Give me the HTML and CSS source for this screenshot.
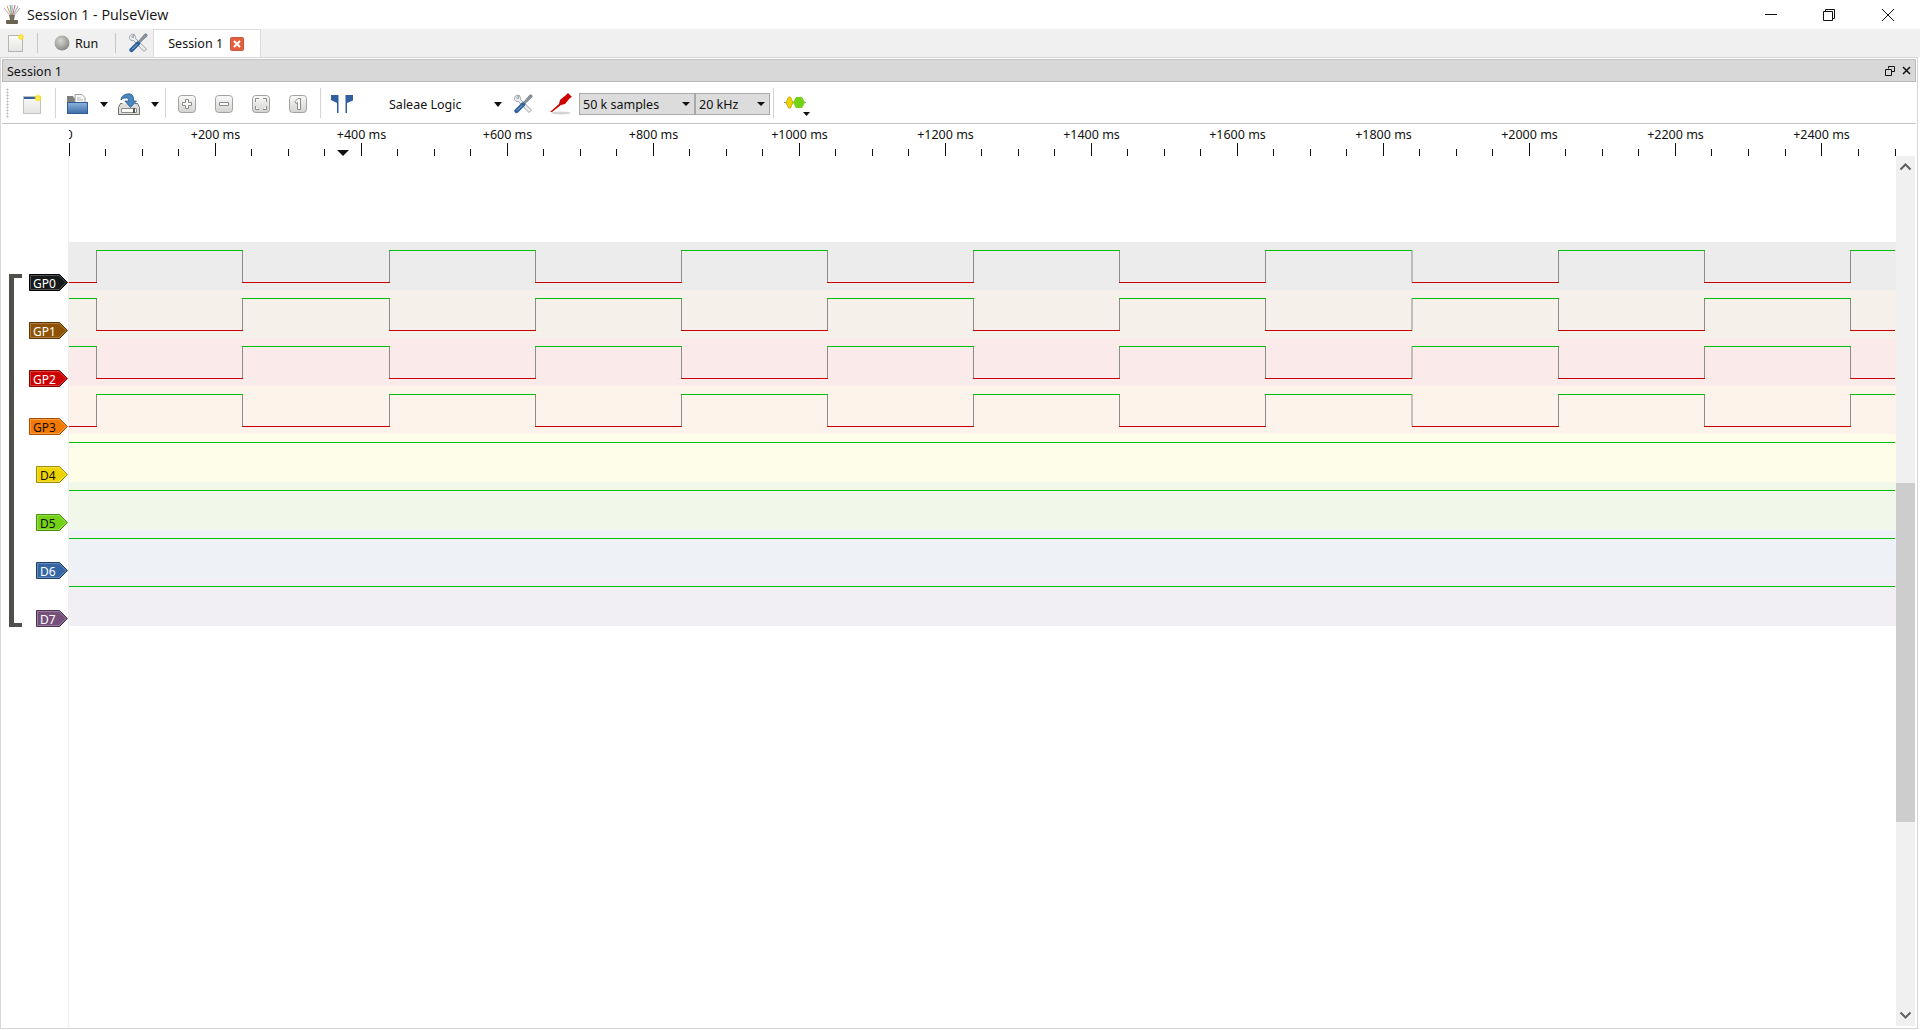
FILE: index.html
```html
<!DOCTYPE html>
<html lang="en">
<head>
    <meta charset="UTF-8">
    <title>Session 1 - PulseView</title>
    <link rel="stylesheet" href="styles.css">
</head>
<body>
    <!-- Shared icons -->
    <svg class="defs" width="0" height="0">
        <defs>
            <radialGradient id="runBall" cx="40%" cy="35%" r="70%">
                <stop offset="0" stop-color="#d6d6d4"/>
                <stop offset="1" stop-color="#85857f"/>
            </radialGradient>
            <radialGradient id="glow">
                <stop offset="0" stop-color="#fff36a"/>
                <stop offset="0.55" stop-color="#f5e32a"/>
                <stop offset="1" stop-color="#f5e32a" stop-opacity="0"/>
            </radialGradient>
            <linearGradient id="pageFill" x1="0" y1="0" x2="0" y2="1">
                <stop offset="0" stop-color="#fbfbfa"/>
                <stop offset="1" stop-color="#e4e4e2"/>
            </linearGradient>
            <linearGradient id="btnFill" x1="0" y1="0" x2="0" y2="1">
                <stop offset="0" stop-color="#fafafa"/>
                <stop offset="1" stop-color="#d2d2d0"/>
            </linearGradient>
            <linearGradient id="folderFill" x1="0" y1="0" x2="0" y2="1">
                <stop offset="0" stop-color="#8db3dc"/>
                <stop offset="1" stop-color="#3d6ea8"/>
            </linearGradient>
            <symbol id="tools" viewBox="0 0 20 20">
                <path d="M6 1.500C3.500.5 1 2.500 1.500 5.500 2 7 4 8 5.500 7.500L16 18.500 18.500 16 7.500 5.500C8 4.500 7.500 2.500 6 1.500L5.500 4.500 3.500 4z" fill="#eceeef" stroke="#8f969c" stroke-width=".9"/>
                <path d="M18.800 1.200 17 .8 9.500 9.500 10.800 10.800 19.200 3z" fill="#8a949e" stroke="#5f6a75" stroke-width=".6"/>
                <path d="M10 10.500 3.500 17" fill="none" stroke="#2f629c" stroke-width="4.400" stroke-linecap="round"/>
                <path d="M9 11.500 4 16.500" fill="none" stroke="#8fb4da" stroke-width="1"/>
            </symbol>
            <!-- Traces: a starts low, b starts high -->
            <symbol id="waveEdges" viewBox="0 0 1827 48">
                <path class="edge" d="M27.500 8.500V40.500M173.500 8.500V40.500M320.500 8.500V40.500M466.500 8.500V40.500M612.500 8.500V40.500M758.500 8.500V40.500M904.500 8.500V40.500M1050.500 8.500V40.500M1196.500 8.500V40.500M1343 8.500V40.500M1489.500 8.500V40.500M1635.500 8.500V40.500M1781.500 8.500V40.500"/>
            </symbol>
            <symbol id="waveA" viewBox="0 0 1827 48">
                <use href="#waveEdges"/>
                <path class="high" d="M27 8.500H174M320 8.500H467M612 8.500H759M904 8.500H1051M1196 8.500H1343M1489 8.500H1636M1781 8.500H1826"/>
                <path class="low" d="M0 40.500H28M173 40.500H321M466 40.500H613M758 40.500H905M1050 40.500H1197M1343 40.500H1490M1635 40.500H1782"/>
            </symbol>
            <symbol id="waveB" viewBox="0 0 1827 48">
                <use href="#waveEdges"/>
                <path class="high" d="M0 8.500H28M173 8.500H321M466 8.500H613M758 8.500H905M1050 8.500H1197M1343 8.500H1490M1635 8.500H1782"/>
                <path class="low" d="M27 40.500H174M320 40.500H467M612 40.500H759M904 40.500H1051M1196 40.500H1343M1489 40.500H1636M1781 40.500H1826"/>
            </symbol>
            <symbol id="zoomBtn" viewBox="0 0 18 18">
                <rect x="0.500" y="0.500" width="17" height="17" rx="3" fill="url(#btnFill)" stroke="#a2a2a0"/>
            </symbol>
        </defs>
    </svg>

    <header class="titlebar">
        <svg class="app-icon" width="18" height="20" viewBox="0 0 18 20">
            <path d="M9 13 1 3" stroke="#d8a0c8" fill="none"/>
            <path d="M9 13 4 1" stroke="#c8a040" fill="none"/>
            <path d="M9 13 7 0" stroke="#70b070" fill="none"/>
            <path d="M9 13V0" stroke="#6fa0d8" fill="none"/>
            <path d="M9 13 12 0" stroke="#d86060" fill="none"/>
            <path d="M9 13 15 1" stroke="#a0a0a0" fill="none"/>
            <path d="M9 13 17 3" stroke="#b0b0b0" fill="none"/>
            <path d="M6 10h6l-1 5H7z" fill="#77705f"/>
            <rect x="3" y="15" width="12" height="4" rx="1" fill="#6a6352"/>
        </svg>
        <span class="app-title">Session 1 - PulseView</span>
        <div class="win-buttons">
            <span class="win-btn">
                <svg width="14" height="14" viewBox="0 0 14 14"><path d="M1 6.500H13" stroke="#111" fill="none"/></svg>
            </span>
            <span class="win-btn">
                <svg width="14" height="14" viewBox="0 0 14 14"><path d="M3.500 3V1.500H12.500V10.500H10.500M1.500 3.500H10.500V12.500H1.500Z" stroke="#111" fill="none"/></svg>
            </span>
            <span class="win-btn">
                <svg width="14" height="14" viewBox="0 0 14 14"><path d="M1 1 13 13M13 1 1 13" stroke="#111" fill="none"/></svg>
            </span>
        </div>
    </header>

    <nav class="tabbar">
        <svg class="ml-8" width="16" height="20" viewBox="0 0 16 20">
            <rect x="0.500" y="2.500" width="14" height="16" fill="url(#pageFill)" stroke="#b4b4b0"/>
            <circle cx="13" cy="4" r="3.500" fill="url(#glow)"/>
        </svg>
        <span class="tab-sep ml-13"></span>
        <svg class="ml-16" width="16" height="16" viewBox="0 0 16 16">
            <circle cx="8" cy="8" r="7.500" fill="url(#runBall)"/>
        </svg>
        <span class="tab-text">Run</span>
        <span class="tab-sep ml-17"></span>
        <svg class="ml-12" width="20" height="20"><use href="#tools"/></svg>
        <div class="tab">
            <span>Session 1</span>
            <svg class="tab-close" width="14" height="14" viewBox="0 0 14 14">
                <rect x="0.500" y="0.500" width="13" height="13" rx="1" fill="#e2603f" stroke="#c85a3c"/>
                <path d="M4 4 10 10M10 4 4 10" stroke="#fff" stroke-width="2" fill="none"/>
            </svg>
        </div>
    </nav>

    <main class="dock">
        <div class="dock-title">
            <span>Session 1</span>
            <svg class="dock-float" width="10" height="10" viewBox="0 0 10 10">
                <path d="M3.500 2.500V.5H9.500V5.500H7M.5 3.500H6.500V9.500H.5Z" fill="none" stroke="#111"/>
            </svg>
            <svg class="dock-close" width="9" height="9" viewBox="0 0 9 9">
                <path d="M1 1 8 8M8 1 1 8" fill="none" stroke="#111" stroke-width="1.500"/>
            </svg>
        </div>

        <div class="toolbar">
            <span class="grip"></span>
            <svg class="ml-14" width="19" height="20" viewBox="0 0 19 20">
                <rect x="0.500" y="2.500" width="17" height="17" fill="url(#pageFill)" stroke="#c0c0bc"/>
                <rect x="1" y="3" width="16" height="2" fill="#2f5f9e"/>
                <circle cx="15" cy="4" r="4" fill="url(#glow)"/>
            </svg>
            <span class="tool-sep ml-13"></span>
            <svg class="ml-11" width="21" height="20" viewBox="0 0 21 20">
                <path d="M0 2h6l1 2h3v15H0z" fill="#7f7f7d"/>
                <path d="M8 .5h7l3 3v8H8z" fill="#f6f6f4" stroke="#a0a0a0"/>
                <path d="M10 4h4M10 6h6" stroke="#b8b8b8"/>
                <rect x="0.500" y="8.500" width="20" height="11" fill="url(#folderFill)" stroke="#2f5a92"/>
            </svg>
            <span class="caret ml-12"></span>
            <svg class="ml-10" width="22" height="22" viewBox="0 0 22 22">
                <path d="M4.500 10.500H2.500L.5 14.500V21.500H21.500V14.500L19.500 10.500H17" fill="#dededc" stroke="#6e6e6a"/>
                <path d="M3.500 15.500H18.500V19.500H3.500z" fill="#fbfbfa" stroke="#8c8c88"/>
                <rect x="15" y="15" width="2" height="5" fill="#55554f"/>
                <path d="M3 7C3 3 7 .8 11 .8 14 .8 15.500 3 15.500 6V8H18.500L12.500 14.500 6.800 8H10.500V7C10.500 5.500 9 5 8 5 6 5 4 5.500 3 7Z" fill="#4a86c0" stroke="#2c5c94" stroke-width=".8"/>
            </svg>
            <span class="caret ml-11"></span>
            <span class="tool-sep ml-6"></span>
            <svg class="ml-12" width="18" height="18" viewBox="0 0 18 18">
                <use href="#zoomBtn" width="18" height="18"/>
                <path class="zoom-glyph" d="M7.500 4.500h3v3h3v3h-3v3h-3v-3h-3v-3h3z"/>
            </svg>
            <svg class="ml-19" width="18" height="18" viewBox="0 0 18 18">
                <use href="#zoomBtn" width="18" height="18"/>
                <path class="zoom-glyph" d="M4.500 7.500h9v3h-9z"/>
            </svg>
            <svg class="ml-19" width="18" height="18" viewBox="0 0 18 18">
                <use href="#zoomBtn" width="18" height="18"/>
                <path class="zoom-glyph" d="M3.500 7V3.500H7M11 3.500h3.500V7M14.500 11v3.500H11M7 14.500H3.500V11"/>
            </svg>
            <svg class="ml-19" width="18" height="18" viewBox="0 0 18 18">
                <use href="#zoomBtn" width="18" height="18"/>
                <path class="zoom-glyph" d="M6 6.500 9 3.500h2.500v11h-3V7.500L7 8.500z"/>
            </svg>
            <span class="tool-sep ml-13"></span>
            <svg class="ml-10" width="22" height="18" viewBox="0 0 22 18">
                <path d="M0 0h7.500v18H6V8L0 5z" fill="#2f5f9e"/>
                <path d="M22 0h-7.500v18H16V8l6-2.500z" fill="#2f5f9e"/>
            </svg>
            <div class="device ml-36">
                <span>Saleae Logic</span>
                <span class="caret"></span>
            </div>
            <svg class="ml-11" width="20" height="20"><use href="#tools"/></svg>
            <svg class="ml-17" width="22" height="22" viewBox="0 0 22 22">
                <ellipse cx="11" cy="20" rx="10" ry="1.500" fill="#d4d4d2"/>
                <path d="M0 19 9 11 10 7l6-5 2-2 4 4-2 1-5 6-4 1-9 7z" fill="#cc0000"/>
            </svg>
            <div class="combo combo-samples ml-7">
                <span>50 k samples</span>
                <span class="caret"></span>
            </div>
            <div class="combo combo-rate">
                <span>20 kHz</span>
                <span class="caret"></span>
            </div>
            <span class="tool-sep ml-3"></span>
            <svg class="decoder-icon ml-10" width="28" height="22" viewBox="0 0 28 22">
                <path d="M0 8.500H22" stroke="#8a8a86" fill="none"/>
                <path d="M2 8.500 4.500 3 6.500 3 9 8.500 6.500 14 4.500 14z" fill="#edd400" stroke="#c4a000" stroke-width=".8"/>
                <path d="M9 8.500 12 3H18L21 8.500 18 14H12z" fill="#73d216"/>
                <path d="M19 18h7l-3.500 4z" fill="#111"/>
            </svg>
        </div>

        <div class="ruler">
            <svg width="1827" height="32" viewBox="69 124 1827 32">
                <g class="ruler-text">
                    <text x="69" y="139">0</text>
                    <text x="215.500" y="139">+200 ms</text>
                    <text x="361.500" y="139">+400 ms</text>
                    <text x="507.500" y="139">+600 ms</text>
                    <text x="653.500" y="139">+800 ms</text>
                    <text x="799.500" y="139">+1000 ms</text>
                    <text x="945.500" y="139">+1200 ms</text>
                    <text x="1091.500" y="139">+1400 ms</text>
                    <text x="1237.500" y="139">+1600 ms</text>
                    <text x="1383.500" y="139">+1800 ms</text>
                    <text x="1529.500" y="139">+2000 ms</text>
                    <text x="1675.500" y="139">+2200 ms</text>
                    <text x="1821.500" y="139">+2400 ms</text>
                </g>
                <path class="tick" d="M69.500 143V156M215.500 143V156M361.500 143V156M507.500 143V156M653.500 143V156M799.500 143V156M945.500 143V156M1091.500 143V156M1237.500 143V156M1383.500 143V156M1529.500 143V156M1675.500 143V156M1821.500 143V156"/>
                <path class="tick" d="M105.500 149V156M142.500 149V156M178.500 149V156M251.500 149V156M288.500 149V156M324.500 149V156M397.500 149V156M434.500 149V156M470.500 149V156M543.500 149V156M580.500 149V156M616.500 149V156M689.500 149V156M726.500 149V156M762.500 149V156M835.500 149V156M872.500 149V156M908.500 149V156M981.500 149V156M1018.500 149V156M1054.500 149V156M1127.500 149V156M1164.500 149V156M1200.500 149V156M1273.500 149V156M1310.500 149V156M1346.500 149V156M1419.500 149V156M1456.500 149V156M1492.500 149V156M1565.500 149V156M1602.500 149V156M1638.500 149V156M1711.500 149V156M1748.500 149V156M1785.500 149V156M1858.500 149V156M1895.500 149V156"/>
                <path class="marker" d="M337 150H349L343 156z"/>
            </svg>
        </div>

        <div class="view">
            <div class="headers">
                <div class="group-bracket"></div>
                <div class="chan-head">
                    <svg class="tag tag-gp0" width="39" height="17" viewBox="0 0 39 17">
                        <polygon class="tag-body" points="0.500,0.500 30.500,0.500 38.500,8.500 30.500,16.500 0.500,16.500"/>
                        <polygon class="tag-inner" points="1.500,1.500 30,1.500 37,8.500 30,15.500 1.500,15.500"/>
                        <text x="4" y="13.500">GP0</text>
                    </svg>
                </div>
                <div class="chan-head">
                    <svg class="tag tag-gp1" width="39" height="17" viewBox="0 0 39 17">
                        <polygon class="tag-body" points="0.500,0.500 30.500,0.500 38.500,8.500 30.500,16.500 0.500,16.500"/>
                        <polygon class="tag-inner" points="1.500,1.500 30,1.500 37,8.500 30,15.500 1.500,15.500"/>
                        <text x="4" y="13.500">GP1</text>
                    </svg>
                </div>
                <div class="chan-head">
                    <svg class="tag tag-gp2" width="39" height="17" viewBox="0 0 39 17">
                        <polygon class="tag-body" points="0.500,0.500 30.500,0.500 38.500,8.500 30.500,16.500 0.500,16.500"/>
                        <polygon class="tag-inner" points="1.500,1.500 30,1.500 37,8.500 30,15.500 1.500,15.500"/>
                        <text x="4" y="13.500">GP2</text>
                    </svg>
                </div>
                <div class="chan-head">
                    <svg class="tag tag-gp3" width="39" height="17" viewBox="0 0 39 17">
                        <polygon class="tag-body" points="0.500,0.500 30.500,0.500 38.500,8.500 30.500,16.500 0.500,16.500"/>
                        <polygon class="tag-inner" points="1.500,1.500 30,1.500 37,8.500 30,15.500 1.500,15.500"/>
                        <text x="4" y="13.500">GP3</text>
                    </svg>
                </div>
                <div class="chan-head">
                    <svg class="tag tag-d4" width="32" height="17" viewBox="0 0 32 17">
                        <polygon class="tag-body" points="0.500,0.500 23.500,0.500 31.500,8.500 23.500,16.500 0.500,16.500"/>
                        <polygon class="tag-inner" points="1.500,1.500 23,1.500 30,8.500 23,15.500 1.500,15.500"/>
                        <text x="4" y="13.500">D4</text>
                    </svg>
                </div>
                <div class="chan-head">
                    <svg class="tag tag-d5" width="32" height="17" viewBox="0 0 32 17">
                        <polygon class="tag-body" points="0.500,0.500 23.500,0.500 31.500,8.500 23.500,16.500 0.500,16.500"/>
                        <polygon class="tag-inner" points="1.500,1.500 23,1.500 30,8.500 23,15.500 1.500,15.500"/>
                        <text x="4" y="13.500">D5</text>
                    </svg>
                </div>
                <div class="chan-head">
                    <svg class="tag tag-d6" width="32" height="17" viewBox="0 0 32 17">
                        <polygon class="tag-body" points="0.500,0.500 23.500,0.500 31.500,8.500 23.500,16.500 0.500,16.500"/>
                        <polygon class="tag-inner" points="1.500,1.500 23,1.500 30,8.500 23,15.500 1.500,15.500"/>
                        <text x="4" y="13.500">D6</text>
                    </svg>
                </div>
                <div class="chan-head">
                    <svg class="tag tag-d7" width="32" height="17" viewBox="0 0 32 17">
                        <polygon class="tag-body" points="0.500,0.500 23.500,0.500 31.500,8.500 23.500,16.500 0.500,16.500"/>
                        <polygon class="tag-inner" points="1.500,1.500 23,1.500 30,8.500 23,15.500 1.500,15.500"/>
                        <text x="4" y="13.500">D7</text>
                    </svg>
                </div>
            </div>

            <div class="plot">
                <div class="trace row-gp0"><svg width="1827" height="48"><use href="#waveA" width="1827" height="48"/></svg></div>
                <div class="trace row-gp1"><svg width="1827" height="48"><use href="#waveB" width="1827" height="48"/></svg></div>
                <div class="trace row-gp2"><svg width="1827" height="48"><use href="#waveB" width="1827" height="48"/></svg></div>
                <div class="trace row-gp3"><svg width="1827" height="48"><use href="#waveA" width="1827" height="48"/></svg></div>
                <div class="trace row-d4"><svg width="1827" height="48"><path class="high" d="M0 8.500H1826"/></svg></div>
                <div class="trace row-d5"><svg width="1827" height="48"><path class="high" d="M0 8.500H1826"/></svg></div>
                <div class="trace row-d6"><svg width="1827" height="48"><path class="high" d="M0 8.500H1826"/></svg></div>
                <div class="trace row-d7"><svg width="1827" height="48"><path class="high" d="M0 8.500H1826"/></svg></div>
            </div>

            <div class="scrollbar">
                <svg class="scroll-arrow" width="13" height="8" viewBox="0 0 13 8">
                    <path d="M1.500 6.500 6.500 1.500 11.500 6.500" fill="none" stroke="#606060" stroke-width="2"/>
                </svg>
                <div class="scroll-thumb"></div>
                <svg class="scroll-arrow" width="13" height="8" viewBox="0 0 13 8">
                    <path d="M1.500 1.500 6.500 6.500 11.500 1.500" fill="none" stroke="#606060" stroke-width="2"/>
                </svg>
            </div>
        </div>
    </main>
</body>
</html>
```

FILE: styles.css
```css
/* General styling */
html, body {
    margin: 0;
    padding: 0;
}

body {
    width: 1920px;
    height: 1030px;
    overflow: hidden;
    display: flex;
    flex-direction: column;
    background-color: white;
    color: #111;
    font-family: "Noto Sans", sans-serif;
    font-size: 12.5px;
}

svg {
    display: block;
    flex-shrink: 0;
}

.defs {
    position: absolute;
}

/* Margin helpers for toolbar items */
.ml-3 { margin-left: 3px; }
.ml-6 { margin-left: 6px; }
.ml-7 { margin-left: 7px; }
.ml-8 { margin-left: 8px; }
.ml-10 { margin-left: 10px; }
.ml-11 { margin-left: 11px; }
.ml-12 { margin-left: 12px; }
.ml-13 { margin-left: 13px; }
.ml-14 { margin-left: 14px; }
.ml-16 { margin-left: 16px; }
.ml-17 { margin-left: 17px; }
.ml-19 { margin-left: 19px; }
.ml-36 { margin-left: 36px; }

/* Window title */
.titlebar {
    height: 29px;
    display: flex;
    align-items: center;
    flex-shrink: 0;
}

.app-icon {
    margin-left: 3px;
}

.app-title {
    margin-left: 6px;
    font-family: "Open Sans", sans-serif;
    font-size: 14.3px;
}

.win-buttons {
    display: flex;
    margin-left: auto;
    margin-right: 3px;
}

.win-btn {
    width: 59px;
    display: flex;
    justify-content: center;
}

.win-btn:first-child {
    margin-right: -1px;
}

/* Tab strip */
.tabbar {
    height: 28px;
    display: flex;
    align-items: center;
    flex-shrink: 0;
    background-color: #f0f0f0;
}

.tab-sep {
    width: 1px;
    height: 20px;
    background-color: #c6c6c6;
}

.tab-text {
    margin-left: 5px;
}

.tab {
    align-self: stretch;
    width: 106px;
    margin-left: 5px;
    display: flex;
    align-items: center;
    background-color: white;
    border: 1px solid #dcdcdc;
    border-bottom: none;
}

.tab span {
    margin-left: 14px;
}

.tab-close {
    margin-left: 7px;
}

/* Dock */
.dock {
    flex: 1;
    min-height: 0;
    display: flex;
    flex-direction: column;
    margin: 0 2px 1px 0;
    padding: 1px 1px 0 1px;
    border: 1px solid #d6d6d6;
}

.dock-title {
    height: 23px;
    box-sizing: border-box;
    display: flex;
    align-items: center;
    flex-shrink: 0;
    padding: 0 4px;
    background-color: #d8d8d8;
    border: 1px solid #bababa;
    border-top-color: #c4c4c4;
}

.dock-title span {
    margin-top: 2px;
}

.dock-float {
    margin-left: auto;
}

.dock-close {
    margin-left: 7px;
}

/* Main toolbar */
.toolbar {
    height: 42px;
    box-sizing: border-box;
    display: flex;
    align-items: center;
    flex-shrink: 0;
    padding-top: 3px;
    padding-left: 4px;
    border-bottom: 1px solid #c4c4c4;
}

.grip {
    width: 3px;
    height: 30px;
    margin-top: -3px;
    background-image: radial-gradient(#bdbdbd 45%, transparent 50%);
    background-size: 3px 3px;
}

.tool-sep {
    width: 1px;
    height: 30px;
    margin-top: -3px;
    background-color: #d4d4d4;
}

.caret {
    width: 0;
    height: 0;
    border-style: solid;
    border-width: 5px 4.5px 0 4.5px;
    border-color: #111 transparent transparent transparent;
}

.zoom-glyph {
    fill: #fafafa;
    stroke: #8a8a88;
    stroke-width: 1;
}

.device {
    width: 113px;
    display: flex;
    align-items: center;
    justify-content: space-between;
}

.combo {
    height: 22px;
    box-sizing: border-box;
    display: flex;
    align-items: center;
    justify-content: space-between;
    padding: 0 4px 0 3px;
    background-color: #dcdcdc;
    border: 1px solid #a8a8a8;
}

.combo .caret {
    border-width: 4px 4px 0 4px;
}

.combo-samples {
    width: 116px;
}

.combo-rate {
    width: 75px;
}

.decoder-icon {
    margin-top: 2px;
}

/* Time ruler */
.ruler {
    height: 32px;
    flex-shrink: 0;
    padding-left: 67px;
}

.ruler-text text {
    font-size: 12.5px;
    fill: #111;
    text-anchor: middle;
}

.tick {
    stroke: #111;
    fill: none;
}

.marker {
    fill: #111;
}

/* Trace view */
.view {
    flex: 1;
    min-height: 0;
    display: flex;
    position: relative;
}

.headers {
    width: 66px;
    padding-top: 86px;
    border-right: 1px solid #eeeeee;
    flex-shrink: 0;
}

.group-bracket {
    position: absolute;
    left: 7px;
    top: 118px;
    width: 8px;
    height: 345px;
    border: solid #4f4f4c;
    border-width: 4px 0 4px 5px;
}

.chan-head {
    height: 48px;
    box-sizing: border-box;
    padding-top: 32px;
    display: flex;
    justify-content: flex-end;
}

.tag text {
    font-size: 12px;
    fill: white;
}

.tag-inner {
    fill: none;
    stroke: rgba(255, 255, 255, 0.25);
}

.tag-gp0 .tag-body { fill: #16191a; stroke: #000; }
.tag-gp1 .tag-body { fill: #8f5202; stroke: #5c3501; }
.tag-gp2 .tag-body { fill: #cc0000; stroke: #860000; }
.tag-gp3 .tag-body { fill: #f57900; stroke: #a35000; }
.tag-d4 .tag-body { fill: #edd400; stroke: #9e8d00; }
.tag-d5 .tag-body { fill: #73d216; stroke: #4c8c0e; }
.tag-d6 .tag-body { fill: #3465a4; stroke: #1f3e66; }
.tag-d7 .tag-body { fill: #75507b; stroke: #4b324f; }

.tag-gp3 text, .tag-d4 text, .tag-d5 text {
    fill: #111;
}

.plot {
    width: 1827px;
    padding-top: 86px;
    flex-shrink: 0;
}

.trace {
    height: 48px;
}

.row-gp0 { background-color: #ececec; }
.row-gp1 { background-color: #f5f0e9; }
.row-gp2 { background-color: #faeaea; }
.row-gp3 { background-color: #fdf3ea; }
.row-d4 { background-color: #fefdea; }
.row-d5 { background-color: #f1f8ea; }
.row-d6 { background-color: #eef1f6; }
.row-d7 { background-color: #f1eff3; }

.high {
    stroke: #00c000;
    fill: none;
}

.low {
    stroke: #c80000;
    fill: none;
}

.edge {
    stroke: #8c8c8c;
    fill: none;
}

/* Scrollbar */
.scrollbar {
    width: 19px;
    margin-bottom: 2px;
    display: flex;
    flex-direction: column;
    align-items: center;
    position: relative;
    background-color: #f0f0f0;
}

.scroll-arrow {
    position: absolute;
}

.scroll-arrow:first-child {
    top: 7px;
}

.scroll-arrow:last-child {
    bottom: 7px;
}

.scroll-thumb {
    width: 100%;
    height: 339px;
    margin-top: 327px;
    background-color: #cdcdcd;
}
```
